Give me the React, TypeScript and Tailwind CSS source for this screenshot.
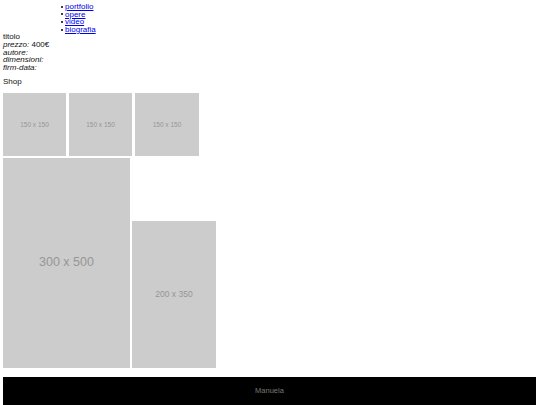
import React from 'react';

function Placeholder({ w, h, label, size }: { w: string; h: string; label: string; size: string }) {
    return (
        <div className={`${w} ${h} ${size} bg-[#cccccc] text-[#969696] flex items-center justify-center shrink-0`}>
            {label}
        </div>
    );
}

const links = ['portfolio', 'opere', 'video', 'biografia'];

export default function App() {
    return (
        <div className="w-[540px] h-[405px] bg-white font-['Liberation_Sans',Arial,sans-serif] text-[8px] leading-[7.6px] text-[#111111] overflow-hidden">
            {/* Nav */}
            <ul className="pl-[61px] pt-[3px]">
                {links.map((l) => (
                    <li key={l} className="flex items-center gap-[2px]">
                        <span className="w-[2px] h-[2px] rounded-full bg-black" />
                        <a href="#" className="text-[#0000ee] underline">{l}</a>
                    </li>
                ))}
            </ul>

            {/* Info */}
            <div className="pl-[3px]">
                <div>titolo</div>
                <div><i>prezzo:</i> 400€</div>
                <div><i>autore:</i></div>
                <div><i>dimensioni:</i></div>
                <div><i>firm-data:</i></div>
                <p className="mt-[7px]">Shop</p>
            </div>

            {/* Gallery */}
            <div className="pl-[3px] mt-[7px] flex flex-col gap-[2px]">
                <div className="flex gap-[3px]">
                    <Placeholder w="w-[63px]" h="h-[63px]" label="150 x 150" size="text-[6.5px]" />
                    <Placeholder w="w-[63px]" h="h-[63px]" label="150 x 150" size="text-[6.5px]" />
                    <Placeholder w="w-[64px]" h="h-[63px]" label="150 x 150" size="text-[6.5px]" />
                </div>
                <div className="flex items-end gap-[2px]">
                    <Placeholder w="w-[127px]" h="h-[210px]" label="300 x 500" size="text-[12.5px]" />
                    <Placeholder w="w-[84px]" h="h-[147px]" label="200 x 350" size="text-[8.5px]" />
                </div>
            </div>

            {/* Footer */}
            <footer className="ml-[3px] mr-[4px] mt-[9px] h-[28px] bg-black flex items-center justify-center text-[#777777] text-[7.5px]">
                Manuela
            </footer>
        </div>
    );
}
